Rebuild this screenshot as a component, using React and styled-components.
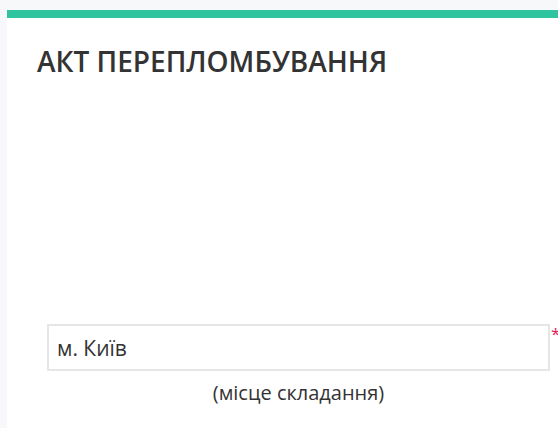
import React from "react";
import styled, { createGlobalStyle } from "styled-components";

const GlobalStyle = createGlobalStyle`
  html, body {
    margin: 0;
    padding: 0;
    background: #f7f8fa;
    font-family: "Open Sans", "Liberation Sans", sans-serif;
    color: #333;
    overflow: hidden;
  }
`;

const Page = styled.div`
  width: 558px;
  height: 428px;
  padding: 10px 0 0 7px;
  box-sizing: border-box;
  overflow: hidden;
`;

const Card = styled.div`
  background: #fff;
  border-top: 8px solid #2ec4a0;
  width: 560px;
  height: 430px;
  padding: 27px 0 0 30px;
  box-sizing: border-box;
`;

const Title = styled.h1`
  margin: 0;
  font-size: 28px;
  line-height: 32px;
  font-weight: 600;
  color: #333;
`;

const Field = styled.div`
  margin: 247px 0 0 10px;
  width: 503px;
`;

const InputRow = styled.div`
  display: flex;
  align-items: flex-start;
`;

const Input = styled.input`
  width: 503px;
  height: 47px;
  box-sizing: border-box;
  border: 2px solid #e6e6e6;
  padding: 0 0 0 8px;
  font-family: inherit;
  font-size: 21px;
  color: #333;
  outline: none;
  flex: none;
`;

const Required = styled.span`
  color: #e8245a;
  font-size: 17px;
  line-height: 20px;
  margin-left: 1px;
`;

const Hint = styled.div`
  text-align: center;
  font-size: 20px;
  line-height: 22px;
  margin-top: 11px;
  color: #333;
`;

export default function App() {
  return (
    <Page>
      <GlobalStyle />
      <Card>
        <Title>АКТ ПЕРЕПЛОМБУВАННЯ</Title>
        <Field>
          <InputRow>
            <Input defaultValue="м. Київ" />
            <Required>*</Required>
          </InputRow>
          <Hint>(місце складання)</Hint>
        </Field>
      </Card>
    </Page>
  );
}
